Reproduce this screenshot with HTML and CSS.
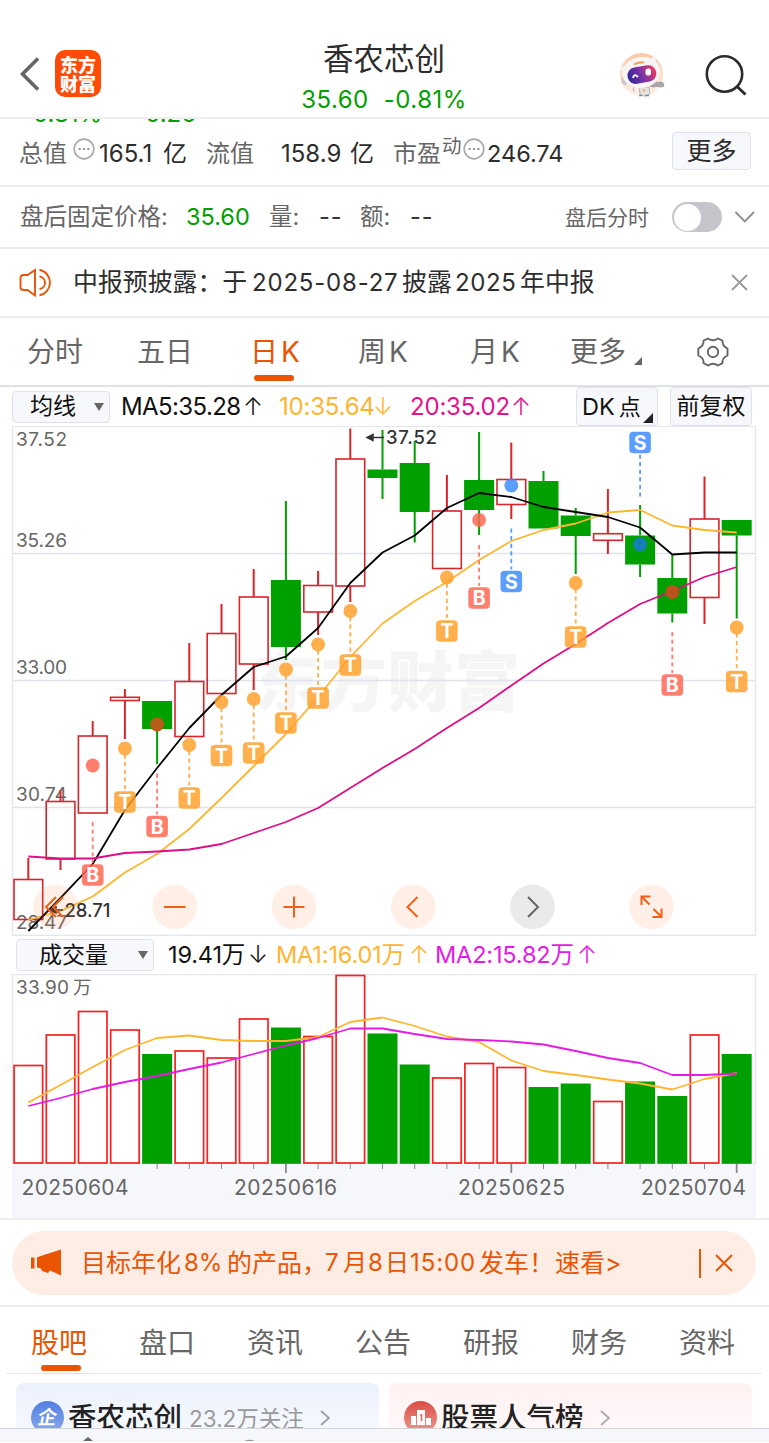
FILE: index.html
```html
<!DOCTYPE html>
<html lang="zh-CN">
<head>
<meta charset="utf-8">
<title>香农芯创</title>
<link rel="stylesheet" href="styles.css">
</head>
<body>
<header class="top">
  <svg class="back" width="20" height="34" viewBox="0 0 20 34"><path d="M18 1.500 2.500 17 18 32.500" fill="none" stroke="#666" stroke-width="3.600"/></svg>
  <div class="logo"><span>东方</span><span>财富</span></div>
  <div class="title"><h1>香农芯创</h1><p><span>35.60</span><span>-0.81%</span></p></div>
  <svg class="robot" width="46" height="46" viewBox="0 0 46 46">
    <defs><linearGradient id="visor" x1="0" x2="1" y1=".6" y2=".4"><stop offset="0" stop-color="#30279b"/><stop offset=".5" stop-color="#7b32a8"/><stop offset="1" stop-color="#ee3b62"/></linearGradient>
    <linearGradient id="halo" x1="0" x2="0" y1="0" y2="1"><stop offset="0" stop-color="#ffc7a5"/><stop offset="1" stop-color="#fff0e8"/></linearGradient></defs>
    <circle cx="22.500" cy="22.500" r="21.500" fill="url(#halo)"/>
    <path d="M16 34q-3 3-1 6M20 35h10l1 7q-6 4-10 0z" fill="#e6e3e4" stroke="#bab5b8"/>
    <path d="M31 34q4 2 6 0l5 1 3-1-1-3-3-1-2 1-2-1" fill="#aaa9b0" stroke="#9c9ba2"/>
    <path d="M20 43.500h3M26 43.500h4" stroke="#888" stroke-width="1.600"/><path d="M25 37v3" stroke="#f2a65e" stroke-width="1.500"/>
    <ellipse cx="6" cy="28" rx="3.500" ry="5" fill="#c9c4c9"/>
    <ellipse cx="22.500" cy="20.500" rx="19" ry="15.500" fill="#f7f5f6" transform="rotate(-10 22 22)"/>
    <path d="M4 20Q0 15 2 12.500l5 5M32 8q2-5 4-6l1 8" fill="#f7f2f0"/>
    <path d="M15 12.500q4-2.500 10-2" fill="none" stroke="#f2a65e" stroke-width="2.400"/>
    <rect x="8.500" y="14.500" width="29" height="16.500" rx="8" fill="url(#visor)" transform="rotate(-10 22 23)"/>
    <rect x="26.500" y="16.500" width="5.500" height="7" rx="2.500" fill="#fff"/><path d="M14 26q1-5 5-1" fill="none" stroke="#fff" stroke-width="1.800"/>
  </svg>
  <svg class="search" width="44" height="44" viewBox="0 0 44 44"><circle cx="20.500" cy="20" r="17.700" fill="none" stroke="#2b2b2b" stroke-width="2.600"/><path d="m33 32.500 8.500 8" stroke="#2b2b2b" stroke-width="2.800"/></svg>
</header>

<section class="summary">
  <div class="clipped"><span>-0.81%</span><span>-0.26</span></div>
  <div class="stats">
    <span class="lbl">总值</span>
    <svg class="dots" width="22" height="22" viewBox="0 0 22 22"><circle cx="11" cy="11" r="9.800" fill="none" stroke="#aaa" stroke-width="1.700"/><path d="M5.500 11h2.200M9.900 11h2.200M14.300 11h2.200" stroke="#999" stroke-width="2"/></svg>
    <span class="val">165.1</span><span class="unit">亿</span>
    <span class="lbl">流值</span><span class="val">158.9</span><span class="unit">亿</span>
    <span class="lbl">市盈</span><span class="sup">动</span>
    <svg class="dots" width="22" height="22" viewBox="0 0 22 22"><circle cx="11" cy="11" r="9.800" fill="none" stroke="#aaa" stroke-width="1.700"/><path d="M5.500 11h2.200M9.900 11h2.200M14.300 11h2.200" stroke="#999" stroke-width="2"/></svg>
    <span class="val pe">246.74</span>
    <button class="more">更多</button>
  </div>
</section>

<section class="after">
  <span>盘后固定价格:</span><span class="price">35.60</span><span>量:</span><span class="dash">--</span><span>额:</span><span class="dash">--</span>
  <span class="small">盘后分时</span><i class="toggle"></i>
  <svg width="22" height="14" viewBox="0 0 22 14"><path d="m1.500 2 9.300 9.500L20 2" fill="none" stroke="#8b8d92" stroke-width="1.800"/></svg>
</section>

<section class="notice">
  <svg width="34" height="30" viewBox="0 0 34 30" fill="none" stroke="#ea5504" stroke-width="1.900"><path d="M16 2 8.500 7H4.500Q1.500 7 1.500 10v9q0 3 3 3h4L16 27.500zM20.500 8.500a6.300 6.300 0 0 1 0 12.500M20.500 1.800a13 13 0 0 1 0 25.500"/></svg>
  <span class="n1">中报预披露：于</span><span class="n2">2025-08-27</span><span class="n3">披露</span><span class="n4">2025</span><span class="n5">年中报</span>
  <svg width="17" height="17" viewBox="0 0 17 17"><path d="m1 1 15 15M16 1 1 16" stroke="#999" stroke-width="1.800"/></svg>
</section>

<nav class="periods">
  <a>分时</a><a>五日</a><a class="on">日<b>K</b></a><a>周<b>K</b></a><a>月<b>K</b></a><a>更多</a>
  <i class="corner"></i>
  <svg width="34" height="32" viewBox="0 0 34 32" fill="none" stroke="#666" stroke-width="1.900"><path d="M12 2.500Q17 6 22 2.500l4.500 2.200Q26 10 31.500 12.500v7Q26 22 26.500 27.200L22 29.500Q17 26 12 29.500L7.500 27.200Q8 22 2.300 19.500v-7Q8 10 7.500 4.700z" stroke-linejoin="round"/><circle cx="17" cy="16" r="5.200"/></svg>
</nav>

<div class="legend">
  <button class="pick">均线<i></i></button>
  <span class="ma5">MA5:35.28</span><em class="k">↑</em>
  <span class="ma10">10:35.64</span><em class="o">↓</em>
  <span class="ma20">20:35.02</span><em class="p">↑</em>
  <button class="dk">DK<b>点</b><i></i></button>
  <button class="adj">前复权</button>
</div>
<svg id="price" class="chart" width="769" height="510" viewBox="0 426 769 510"></svg>
<div class="legend vol">
  <button class="pick">成交量<i></i></button>
  <span class="v0">19.41万</span><em class="k">↓</em>
  <span class="v1">MA1:16.01万</span><em class="o">↑</em>
  <span class="v2">MA2:15.82万</span><em class="m">↑</em>
</div>
<svg id="volume" class="chart" width="769" height="244" viewBox="0 974 769 244"></svg>

<section class="promo">
  <div class="pill">
    <svg width="32" height="28" viewBox="0 0 32 28" fill="#ea5504"><path d="M0 8.500h3.500v11H0zM6 8.500l3-1.200L30 .500v26L19 21.500 17 24l-6-2-1-2.500-4-1z"/></svg>
    <span class="q1">目标年化</span><span class="q2">8%</span><span class="q3">的产品，</span><span class="q4">7</span><span class="q5">月</span><span class="q6">8</span><span class="q7">日</span><span class="q8">15:00</span><span class="q9">发车！</span><span class="q10">速看&gt;</span>
    <i></i>
    <svg width="18" height="18" viewBox="0 0 18 18"><path d="m1 1 16 16M17 1 1 17" stroke="#ea5504" stroke-width="1.900"/></svg>
  </div>
</section>

<nav class="topics"><a class="on">股吧</a><a>盘口</a><a>资讯</a><a>公告</a><a>研报</a><a>财务</a><a>资料</a></nav>

<section class="cards">
  <div class="card blue"><span class="badge"><b>企</b></span><strong>香农芯创</strong><small>23.2万关注</small><svg width="12" height="18" viewBox="0 0 12 18"><path d="m2 2 8 7-8 7" fill="none" stroke="#9a9ca3" stroke-width="1.700"/></svg></div>
  <div class="card pink"><span class="badge"><svg width="20" height="18" viewBox="0 0 20 18"><path d="M0 7h5v9H0zM6 1h8v15H6zM15 9h5v7h-5z" fill="#fff"/><path d="M9 6h1.500v6" fill="none" stroke="#e2655c" stroke-width="1.600"/></svg></span><strong>股票人气榜</strong><svg width="12" height="18" viewBox="0 0 12 18"><path d="m2 2 8 7-8 7" fill="none" stroke="#aaa" stroke-width="1.700"/></svg></div>
</section>
<footer class="dock"><svg width="200" height="12" viewBox="0 0 200 12"><path d="M4 12 9 8l5 4z" fill="#666"/><path d="M166 12.500q5-2 9 0" fill="none" stroke="#999" stroke-width="1.500"/></svg></footer>
<script src="chart.js"></script>
</body>
</html>
```

FILE: styles.css
```css
* { box-sizing: border-box; }
body { margin: 0; width: 769px; height: 1443px; overflow: hidden; background: #fff; color: #2d2d2d; font-family: Inter, "Noto Sans CJK SC", sans-serif; font-size: 24px; line-height: 1; display: flex; flex-direction: column; }
body > * { flex: none; }
span, a, em, strong, small, button { white-space: nowrap; }
svg { display: block; flex: none; }
i, em { font-style: normal; }
h1, p { margin: 0; font-weight: 400; }
button { font: inherit; color: inherit; padding: 0; background: #f7f8fb; border: 1.5px solid #e0e2e9; border-radius: 4px; }

.top { height: 119px; border-bottom: 2px solid #eee; display: grid; grid-template-columns: 35px 46px 165px 353px 85px 44px; padding-left: 20px; align-items: start; }
.back { margin-top: 57px; }
.logo { width: 46px; height: 47px; margin-top: 50px; border-radius: 10px; background: #ff4b05; color: #fff; font: 900 18px/19px "Noto Sans CJK SC", sans-serif; text-align: center; display: flex; flex-direction: column; justify-content: center; }
.title { grid-column: 4; text-align: center; padding-top: 42px; width: 236px; }
.title h1 { font-size: 30.5px; line-height: 34px; }
.title p { margin-top: 12px; line-height: 24px; color: #00a000; display: flex; justify-content: center; gap: 15px; letter-spacing: .5px; }
.robot { grid-column: 5; margin-top: 52px; }
.search { margin-top: 54px; grid-column: 6; }

.summary { height: 68px; border-bottom: 2px solid #eee; overflow: hidden; }
.clipped { height: 4px; display: flex; gap: 32px; padding-left: 22px; color: #00a000; align-items: flex-end; overflow: hidden; line-height: 21px; }
.clipped span { margin-bottom: -1px; }
.stats { height: 61px; display: grid; grid-template-columns: 54px 26px 64px 43px 75px 69px 43px 49px 21px 24px 185px 79px; padding-left: 19px; align-items: center; }
.lbl { color: #666; }
.stats .dots { margin-top: -10px; }
.sup { font-size: 19.5px; color: #666; margin-top: -14px; }
.pe { font-size: 23.500px; }
.more { width: 79px; height: 38px; margin-top: -5px; font-size: 25px; }

.after { height: 62px; border-bottom: 2px solid #eee; display: grid; grid-template-columns: 166px 83px 50px 41px 50px 155px 107px 62px 22px; padding-left: 20px; align-items: center; font-size: 23.500px; color: #666; }
.after .price { color: #00a000; }
.after .dash { color: #333; letter-spacing: 1px; }
.after .small { font-size: 21px; }
.toggle { width: 50px; height: 30px; border-radius: 15px; background: #c4c6cc; padding: 1.5px; display: block; }
.toggle::before { content: ""; display: block; width: 27px; height: 27px; border-radius: 50%; background: #fff; }

.notice { height: 69px; border-bottom: 2px solid #eee; display: grid; grid-template-columns: 54px 179px 150px 53px 65px 211px 17px; padding-left: 19px; align-items: center; font-size: 24px; }
.n1, .n3, .n5 { font-size: 24.900px; }
.n2 { letter-spacing: .8px; }
.n4 { letter-spacing: .6px; }

.periods { height: 69px; border-bottom: 2px solid #dfe0e8; display: grid; grid-template-columns: 110px 113px 108px 112px 100px 64px 62px 34px; padding-left: 27px; align-items: center; font-size: 28px; color: #666; }
.periods a { position: relative; }
.periods b { font-weight: 400; margin-left: 3px; }
.periods .on, .topics .on { color: #ea5504; }
.periods .on::after, .topics .on::after { content: ""; position: absolute; width: 40px; height: 6px; border-radius: 3px; background: #ea5504; left: 4px; top: 37px; }
.corner { border: 4px solid #666; border-top-color: transparent; border-left-color: transparent; width: 8px; height: 8px; margin-top: 19px; }

.legend { height: 39px; display: grid; grid-template-columns: 109px 122px 36px 94px 37px 101px 65px 94px 82px; padding-left: 12px; align-items: center; font-size: 24px; color: #111; }
.legend em { font-size: 24px; font-weight: 300; }
.legend span { letter-spacing: -.6px; }
.pick { width: 98px; height: 32px; display: flex; align-items: center; justify-content: space-between; padding: 0 5px 0 17px; font-size: 23px; }
.pick i { border: 5px solid transparent; border-top: 8px solid #666; border-bottom: 0; }
.legend .ma10, .legend .o, .legend .v1 { color: #ffb52f; }
.legend .ma20, .legend .p { color: #e5128b; }
.legend .ma10, .legend .ma20 { letter-spacing: -.2px; }
.legend .m, .legend .v2 { color: #e51ae5; }
.dk, .adj { height: 39px; width: 82px; position: relative; }
.adj { font-size: 23px; }
.dk { text-align: left; padding-left: 5px; font-size: 23.500px; }
.dk b { font-weight: 400; margin-left: 4px; font-size: 22px; }
.dk i { position: absolute; right: 4px; bottom: 2px; border: 5.500px solid #222; border-top-color: transparent; border-left-color: transparent; }
.legend.vol { height: 38px; padding-left: 16px; grid-template-columns: 152px 80px 28px 133px 26px 142px 30px; font-size: 23.500px; }
.legend.vol span { letter-spacing: -.15px; }
.vol .pick { width: 138px; padding-left: 22px; }
.chart text { font-family: Inter, "Noto Sans CJK SC", sans-serif; }

.promo { height: 89px; border-top: 2px solid #eee; border-bottom: 2px solid #eee; padding: 11px 13px 0 12px; }
.pill { height: 64px; border-radius: 32px; background: #fdede4; color: #ea5504; display: grid; grid-template-columns: 50px 103px 43px 98px 18px 25px 17px 25px 69px 76px 144px 16px 18px; padding-left: 19px; align-items: center; }
.pill i { width: 2px; height: 29px; background: #ea5504; }
.q1, .q3, .q9, .q10 { font-size: 25px; }
.q8 { letter-spacing: .9px; }

.topics { height: 67px; display: grid; grid-template-columns: repeat(7, 108px); margin: 0 7px 0 6px; padding: 5px 0 0 25px; border-bottom: 1.500px solid #e4e4e6; align-items: center; font-size: 28px; color: #666; }
.topics a { position: relative; }
.topics .on::after { left: 10px; top: 36px; }

.cards { height: 54px; padding: 9px 17px 0 16px; display: flex; gap: 10px; overflow: hidden; }
.card { width: 363px; height: 80px; border-radius: 8px; padding: 18px 15px; display: flex; align-items: flex-start; }
.blue { background: linear-gradient(#ebf1fd, #f9fbff 60px); }
.pink { background: linear-gradient(#fff1f2, #fffafa 60px); }
.badge { flex: none; width: 33px; height: 33px; border-radius: 50%; display: flex; align-items: center; justify-content: center; color: #fff; font-size: 19px; background: linear-gradient(#527ee0, #8dabed); }
.badge b { transform: skewX(-10deg); }
.pink .badge { background: linear-gradient(#da4c45, #ef9b94); }
.card strong { font-size: 28.500px; font-weight: 500; line-height: 34px; margin-left: 4px; color: #222; }
.card small { font-size: 22.500px; line-height: 36px; color: #999; margin-left: 7px; }
.card > svg { margin: 8px 0 0 15px; }
.dock { height: 14px; border-top: 1.500px solid #d2d4da; background: #f6f7fa; padding-left: 79px; }
```

FILE: chart.js
```js
const GREEN = '#00a000', RED = '#d8252b', VRED = '#f91f20';
const X0 = 28.3, STEP = 32.2;
const x = i => +(X0 + STEP * i).toFixed(1);
const line = (x1, y1, x2, y2, c, w, extra = '') => `<line x1="${x1}" y1="${y1}" x2="${x2}" y2="${y2}" stroke="${c}" stroke-width="${w}" ${extra}/>`;
const text = (tx, ty, s, size, width, c = '#666', extra = '') => `<text x="${tx}" y="${ty}" font-size="${size}" fill="${c}" ${width ? `textLength="${width}"` : ''} ${extra}>${s}</text>`;
const curve = (ys, c) => `<polyline points="${ys.map((y, i) => x(i) + ',' + y).join(' ')}" fill="none" stroke="${c}" stroke-width="1.8" stroke-linejoin="round"/>`;

// [rising, top, bottom, high, low]
const candles = [
  [1,879.5,919.5,858,919.5],[1,801.5,859,790,870],[1,736,813,721,813],[1,697.3,700.5,689,739],[0,701,729,701,764],
  [1,681.5,736.5,643,736.5],[1,633.5,693.5,604,693.5],[1,597,664,569,690],[0,580,647,501,660],[1,585.5,612,571,635],
  [1,459,586,428.5,602],[0,469.5,478,430,499],[0,463,512,441,542.5],[1,511,568.5,475,568.5],[0,480,510,432,535],
  [1,479.5,504.5,442.5,519],[0,481,528.5,471,528.5],[0,515.5,536,508,574],[1,533.7,540.3,489,554],[0,535.5,564.5,505,577],
  [0,578,613.5,554,622.5],[1,519,597.5,476.5,624],[0,520,535.5,520,618.5]
];
const ma5 = [931,898,864,810,768,728,695,667,656.5,628,583,552.5,535.5,508,493,497,507,512,517,527.5,554.5,552.5,552.5];
const ma10 = [920,911,896.5,872.5,854,829,798,766,734,697,657,623.5,601,582,560,541,530,523.5,512.5,510,525.5,530,532.5];
const ma20 = [856.5,858.5,858.5,853,851.5,849.5,844,833,822,808,788,768,749,728,708,685.5,663.5,644,623,604,591,577,567];
// [index, kind, dot y, box y]
const marks = [[2,'B',765.5,875],[3,'T',748.5,802],[4,'B',724.5,826.5],[5,'T',745,798],[6,'T',702,755.5],[7,'T',699,753],[8,'T',669.5,723],[9,'T',644.5,698],[10,'T',611,665],[13,'T',577.5,631],[14,'B',520,598],[15,'S',485.5,581.5],[17,'T',583,637],[19,'S',544.5,442.5],[20,'B',592,685],[22,'T',627.5,681.5]];
const tone = { B: '#ff6654', T: '#ffa02a', S: '#3d8bff' };

let p = '<rect x="12.5" y="426.3" width="743" height="509" fill="none" stroke="#e3e5ea" stroke-width="1.3"/>';
p += text(254, 706, '东方财富', 66, 266, '#f5f5f6', 'font-weight="900"');
for (const y of [553.5, 680.5, 807.5]) p += line(12.5, y, 755.5, y, '#dfe3ec', 1.5);
for (const [y, s] of [[446,'37.52'],[546.5,'35.26'],[674,'33.00'],[801,'30.74'],[929,'28.47']]) p += text(16, y, s, 19, 51);
candles.forEach(([up, t, b, h, l], i) => {
  const c = up ? RED : GREEN;
  if (h < t) p += line(x(i), h, x(i), t, c, 2);
  if (l > b) p += line(x(i), b, x(i), l, c, 2);
  p += up ? `<rect x="${x(i) - 14.3}" y="${t}" width="28.7" height="${b - t}" fill="none" stroke="${c}" stroke-width="1.6"/>`
          : `<rect x="${x(i) - 15}" y="${t}" width="30" height="${b - t}" fill="${c}"/>`;
});
p += curve(ma10, '#ffb62e') + curve(ma5, '#000') + curve(ma20, '#e00d85');
marks.forEach(([i, k, d, b]) => {
  const c = tone[k], cx = x(i);
  const dark = { 4: '#b65d1c', 19: '#177fb8', 20: '#bc531d' }[i];
  const from = k === 'T' ? d + 6 : b > d ? b - 53 : b + 12;
  const to = b > d ? b - 12 : b + 54;
  p += line(cx, from, cx, to, c, 1.8, 'stroke-dasharray="4.200 3.400" opacity=".85"');
  p += `<circle cx="${cx}" cy="${d}" r="6.900" fill="${dark || c}" opacity="${dark ? 1 : .84}"/><rect x="${cx - 10.8}" y="${b - 10.8}" width="21.600" height="21.600" rx="4" fill="${c}" opacity=".84"/>`;
  p += text(cx, b + 7, k, 19.5, 0, '#fff', 'font-weight="700" text-anchor="middle"');
});
p += '<path d="M384 437.500h-16m5-3-6 3 6 3z" fill="#333" stroke="#333" stroke-width="1.500"/>' + text(386, 444, '37.52', 18.5, 51, '#333', 'font-weight="500"');
p += '<path d="M63 910h-12m5-3-6 3 6 3z" fill="#333" stroke="#333" stroke-width="1.500"/>' + text(64.5, 917, '28.71', 18.5, 46, '#333', 'font-weight="500"');
[55.5, 174.7, 294, 413.2, 532.5, 651.5].forEach((cx, i) => p += `<circle cx="${cx}" cy="906.800" r="22.300" fill="${i === 4 ? '#bbb' : '#ff7c32'}" opacity="${i === 4 ? .3 : .12}"/>`);
p += `<g fill="none" stroke="#f06018" stroke-width="2"><path d="m56 897-10 10 10 10m7-20-10 10 10 10M164 907h21.500M283.500 907h21M294 896.500v21M417.500 897l-10 10 10 10"/><path d="M641.500 905v-8.500h9m-9 0 8 8M661.500 908.500v8.500h-9m9 0-8-8"/><path d="m528 897 10 10-10 10" stroke="#666"/></g>`;
document.getElementById('price').innerHTML = p;

const vols = [1065,1034.5,1011,1029.5,1054,1050.5,1057.5,1018.5,1027.5,1036,975,1033.5,1064.5,1077.5,1063,1067,1087,1083.5,1101,1081.5,1096,1034.5,1054];
const vm1 = [1102.5,1085,1067,1050,1038,1035.5,1040,1041,1041,1037,1022,1017.5,1026,1036.5,1042,1060.5,1071,1075,1079.5,1083.5,1089.5,1079,1073];
const vm2 = [1106,1098,1089,1082,1076,1069,1062.5,1054,1045.5,1038,1028.5,1028.5,1034,1039,1040,1041.5,1044.5,1051,1058,1063,1075,1075,1073.5];
let v = '<rect x="12.500" y="974.500" width="743" height="189" fill="none" stroke="#e3e5ea" stroke-width="1.300"/><rect x="12" y="1164" width="744" height="54" fill="#f6f7fa"/>';
v += text(16, 993.5, '33.90', 19, 53) + text(73, 993.5, '万', 18.5, 0);
vols.forEach((y, i) => {
  const rising = candles[i][0] && i !== 14 || i === 14;
  v += rising ? `<rect x="${x(i) - 14.2}" y="${y + .5}" width="28.500" height="${1162.5 - y}" fill="none" stroke="${VRED}" stroke-width="1.700"/>`
              : `<rect x="${x(i) - 15}" y="${y}" width="30" height="${1163.8 - y}" fill="${GREEN}"/>`;
  if (i > 3) { const big = i === 8 || i === 15 || i === 22; v += line(x(i), 1164, x(i), big ? 1173 : 1169, '#888', big ? 1.8 : 1); }
});
v += curve(vm1, '#ffb62e') + curve(vm2, '#e51ae5');
for (const [tx, s] of [[21.5,'20250604'],[234,'20250616'],[458,'20250625'],[641,'20250704']]) v += text(tx, 1194.5, s, 21, tx > 600 ? 105 : tx > 230 && tx < 300 ? 103 : 107);
document.getElementById('volume').innerHTML = v;
```
